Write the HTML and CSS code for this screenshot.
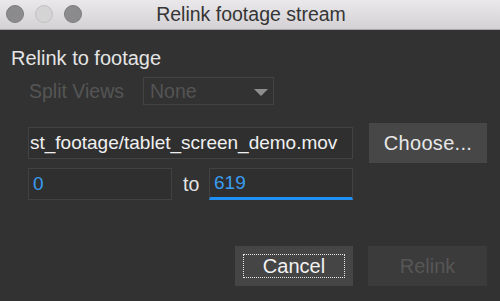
FILE: index.html
```html
<!DOCTYPE html>
<html>
  <head>
    <title>Relink footage stream</title>
    <link rel="stylesheet" href="styles.css">
  </head>
  <body>
    <div class="titleBar">
      <div class="lights">
        <span class="light dark"></span>
        <span class="light pale"></span>
        <span class="light dark"></span>
      </div>
      <div class="title">Relink footage stream</div>
    </div>

    <div class="dialog">
      <h1>Relink to footage</h1>

      <div class="row splitRow">
        <label class="splitLabel">Split Views</label>
        <div class="dropdown">
          <span>None</span>
          <span class="arrow"></span>
        </div>
      </div>

      <div class="row pathRow">
        <input class="field pathField" type="text" value="st_footage/tablet_screen_demo.mov" readonly>
        <button class="btn chooseBtn">Choose...</button>
      </div>

      <div class="row rangeRow">
        <input class="field numField" type="text" value="0">
        <span class="toLabel">to</span>
        <input class="field numField active" type="text" value="619">
      </div>

      <div class="row buttonRow">
        <button class="btn cancelBtn">Cancel</button>
        <button class="btn relinkBtn" disabled>Relink</button>
      </div>
    </div>
  </body>
</html>
```

FILE: styles.css
```css
*{
  box-sizing: border-box;
}

html, body{
  margin: 0;
  height: 100%;
}

body{
  background: #323232;
  font-family: "Liberation Sans", Arial, sans-serif;
  overflow: hidden;
}

.titleBar{
  position: relative;
  height: 30px;
  background: linear-gradient(#eae8ea, #d3d1d3);
  border-bottom: 1px solid #a9a7a9;
}

.lights{
  position: absolute;
  left: 6px;
  top: 5px;
  display: flex;
  gap: 11px;
}

.light{
  width: 18px;
  height: 18px;
  border-radius: 50%;
}

.light.dark{
  background: #8b8a8d;
  border: 1px solid #7d7c7f;
}

.light.pale{
  background: #d5d4d5;
  border: 1px solid #c3c2c3;
}

.title{
  text-align: center;
  padding-left: 2px;
  font-size: 19.5px;
  line-height: 29px;
  color: #353535;
}

.dialog{
  padding: 0 13px 0 28px;
}

h1{
  margin: 17px 0 0 -17px;
  font-size: 20px;
  font-weight: normal;
  line-height: 22px;
  color: #e4e4e4;
}

.row{
  display: flex;
  align-items: center;
}

.splitRow{
  margin-top: 8px;
}

.splitLabel{
  width: 115px;
  padding-left: 1px;
  font-size: 19.5px;
  color: #555555;
}

.dropdown{
  position: relative;
  width: 131px;
  height: 28px;
  border: 1px solid #434343;
  padding-left: 6px;
  font-size: 19.5px;
  line-height: 26px;
  color: #545454;
}

.arrow{
  position: absolute;
  right: 5px;
  top: 11px;
  width: 0;
  height: 0;
  border-left: 7px solid transparent;
  border-right: 7px solid transparent;
  border-top: 7px solid #8e8e8e;
}

.pathRow{
  margin-top: 18px;
}

.field{
  height: 32px;
  margin: 0;
  background: #2f2f2f;
  border: 1px solid #424242;
  outline: none;
  font-family: "Liberation Sans", Arial, sans-serif;
  font-size: 19px;
}

.pathField{
  width: 325px;
  padding: 0 1px;
  color: #f0f0f0;
}

.btn{
  height: 40px;
  margin: 0;
  border: none;
  font-family: "Liberation Sans", Arial, sans-serif;
  font-size: 20px;
}

.chooseBtn{
  width: 118px;
  margin-left: 16px;
  background: #474747;
  color: #e8e8e8;
  letter-spacing: 0.3px;
}

.rangeRow{
  margin-top: 5px;
}

.numField{
  width: 144px;
  padding: 0 4px;
  color: #3a9cf0;
}

.numField.active{
  border-bottom: 3px solid #1f8ff5;
}

.toLabel{
  width: 37px;
  padding-left: 11px;
  font-size: 19.5px;
  color: #e4e4e4;
}

.buttonRow{
  margin-top: 46px;
  justify-content: flex-end;
  gap: 15px;
}

.cancelBtn{
  width: 118px;
  background: #454545;
  color: #f2f2f2;
  outline: 1px dotted #e6e6e6;
  outline-offset: -9px;
}

.relinkBtn{
  width: 119px;
  background: #3b3b3b;
  color: #565656;
}
```
